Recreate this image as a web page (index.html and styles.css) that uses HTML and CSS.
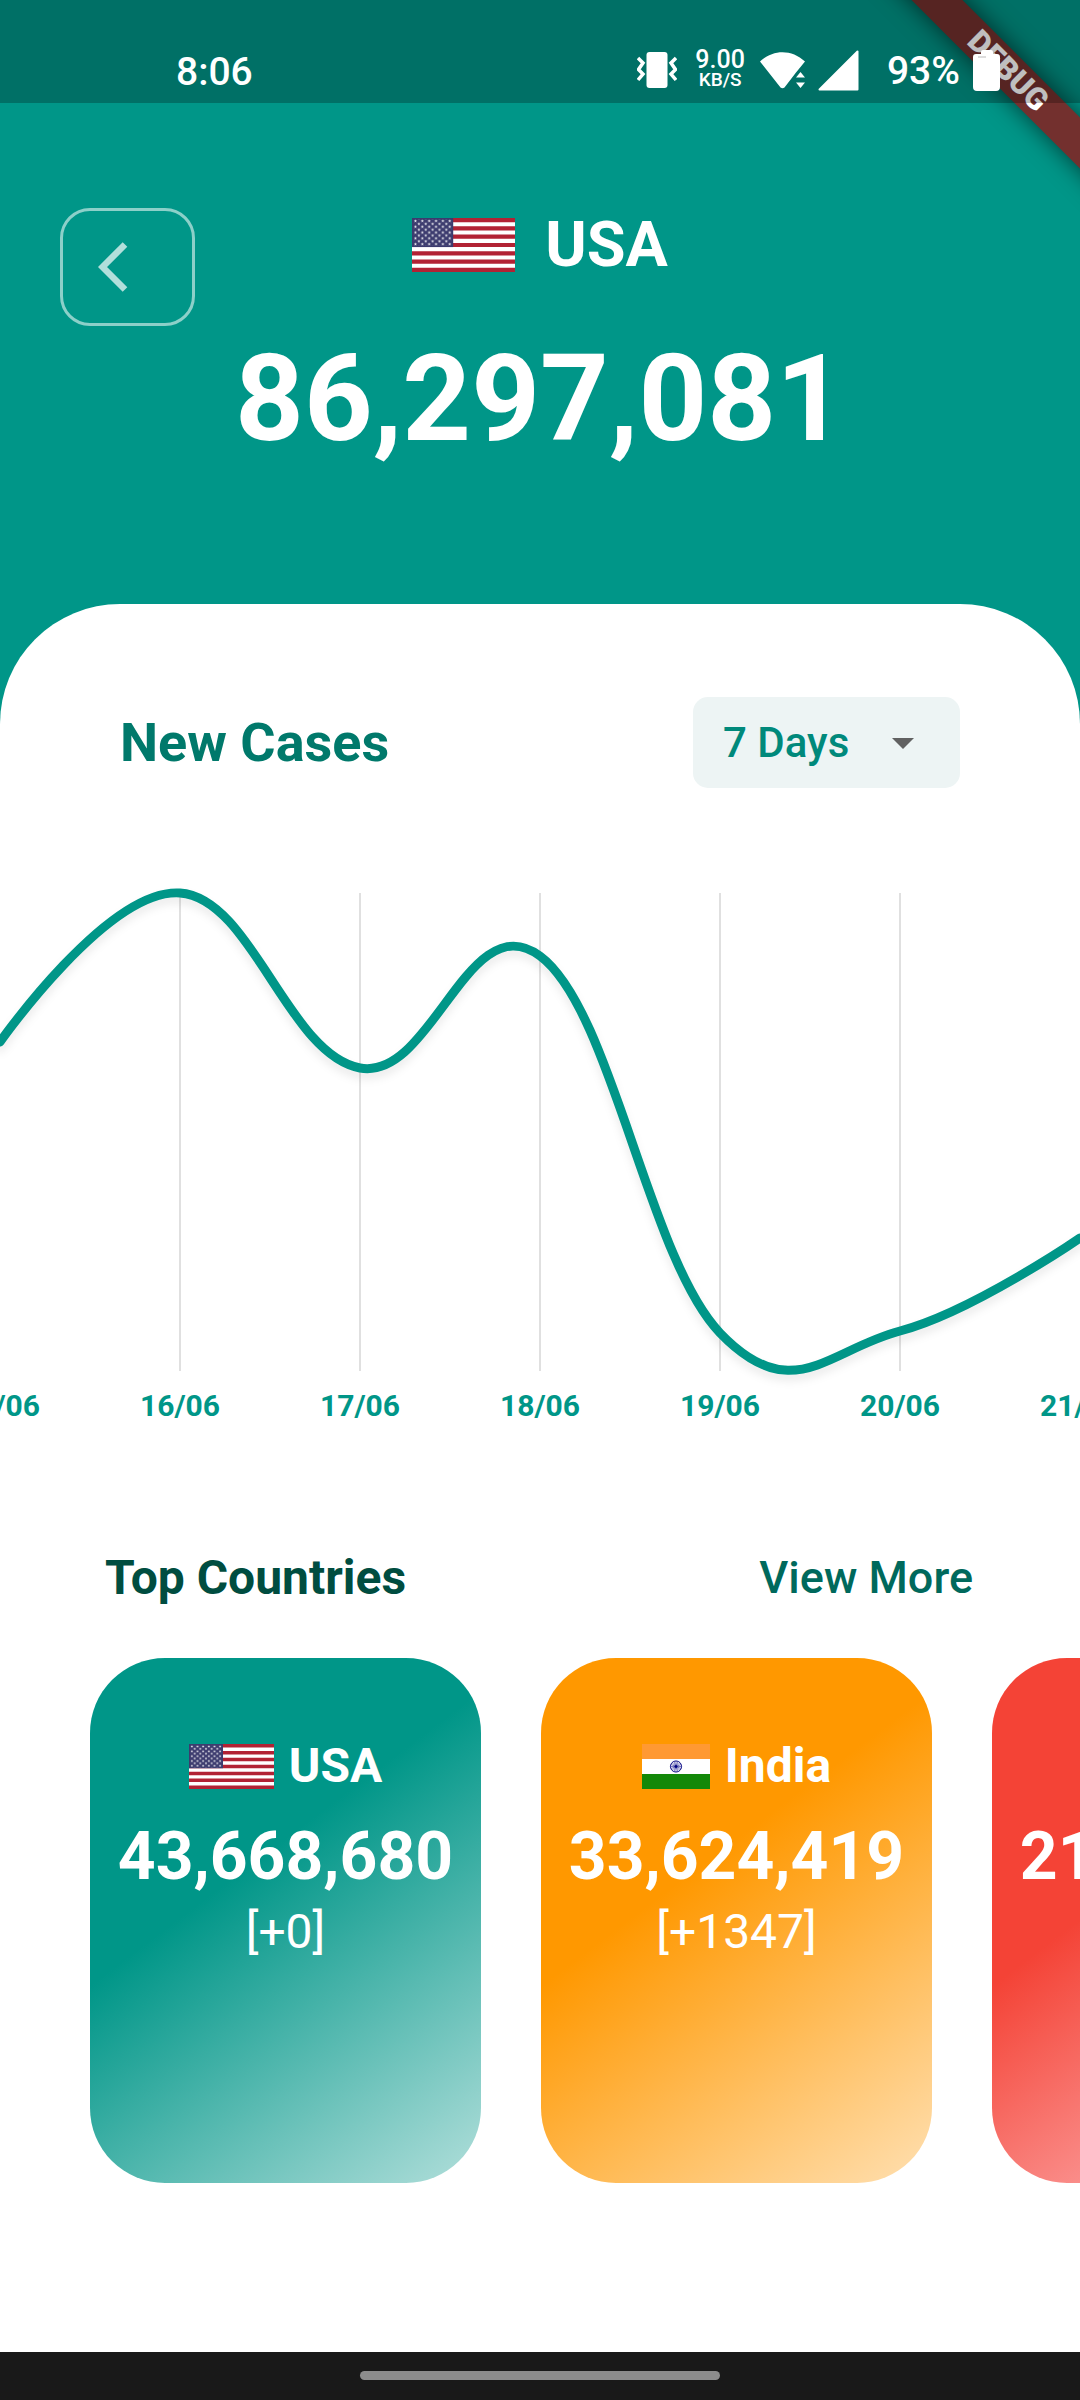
FILE: index.html
```html
<!DOCTYPE html>
<html lang="en">
<head>
<meta charset="utf-8">
<meta name="viewport" content="width=device-width, initial-scale=1">
<title>USA cases</title>
<link rel="stylesheet" href="styles.css">
</head>
<body>
<svg class="sprite" aria-hidden="true">
  <defs>
    <polygon id="star" points="0,-20 4.7,-6.5 19,-6.2 7.6,2.5 11.8,16.2 0,8 -11.8,16.2 -7.6,2.5 -19,-6.2 -4.7,-6.5"/>
    <pattern id="stars" width="82.33" height="70" patternUnits="userSpaceOnUse">
      <g fill="#fff">
        <use href="#star" x="41.17" y="35"/>
        <use href="#star"/>
        <use href="#star" x="82.33"/>
        <use href="#star" y="70"/>
        <use href="#star" x="82.33" y="70"/>
      </g>
    </pattern>
    <symbol id="flag-us" viewBox="0 0 1235 650" preserveAspectRatio="none">
      <rect width="1235" height="650" fill="#fff"/>
      <path d="M0 25H1235M0 125H1235M0 225H1235M0 325H1235M0 425H1235M0 525H1235M0 625H1235" stroke="#b22234" stroke-width="50"/>
      <rect width="494" height="350" fill="#3c3b6e"/>
      <rect x="20" y="14" width="454" height="322" fill="url(#stars)"/>
    </symbol>
    <symbol id="flag-in" viewBox="0 0 900 600" preserveAspectRatio="none">
      <rect width="900" height="600" fill="#fff"/>
      <rect width="900" height="200" fill="#ff9933"/>
      <rect y="400" width="900" height="200" fill="#138808"/>
      <g stroke="#000080" fill="none">
        <circle cx="450" cy="300" r="74" stroke-width="12"/>
        <path stroke-width="7" d="M376 300H524M450 226V374M398 248L502 352M398 352L502 248M382 272L518 328M382 328L518 272M422 232L478 368M422 368L478 232"/>
      </g>
      <circle cx="450" cy="300" r="18" fill="#000080"/>
    </symbol>
    <symbol id="flag-br" viewBox="0 0 1000 700">
      <rect width="1000" height="700" fill="#009b3a"/>
      <path d="M85 350L500 85L915 350L500 615Z" fill="#fedf00"/>
      <circle cx="500" cy="350" r="175" fill="#002776"/>
    </symbol>
  </defs>
</svg>

<div class="banner-clip"><div class="banner">DEBUG</div></div>

<div class="status-bar">
  <span class="clock">8:06</span>
  <div class="status-icons">
    <svg class="vibrate" viewBox="0 0 40 36" width="40" height="36" aria-hidden="true">
      <rect x="9.500" y="0" width="21" height="36" rx="3" fill="#fff"/>
      <path d="M1 6L6 11L1.500 17.500L6 22L1 28M39 6L34 11L38.500 17.500L34 22L39 28" fill="none" stroke="#fff" stroke-width="3.500"/>
    </svg>
    <div class="speed"><span>9.00</span><small>KB/S</small></div>
    <svg class="wifi" viewBox="0 0 46 38" width="46" height="38" aria-hidden="true">
      <path d="M0 10.500C13 -2 32 -2 45 10.500L36 21.500L24.500 36.500Q22.500 38 20.500 36.500Z" fill="#fff"/>
      <path d="M40.500 17L31 29.500L36 38H46V20Z" fill="#007066"/>
      <path d="M40.500 21L45 26.500H36ZM40.500 37L45 31.500H36Z" fill="#fff"/>
    </svg>
    <svg class="signal" viewBox="0 0 41 41" width="41" height="41" aria-hidden="true">
      <path d="M1.500 39.500L39.500 1.500V39.500Z" fill="#fff" stroke="#fff" stroke-width="2" stroke-linejoin="round"/>
    </svg>
    <span class="battery-text">93%</span>
    <svg class="battery" viewBox="0 0 27 41" width="27" height="41" aria-hidden="true">
      <path d="M8 2Q8 0 10 0H18Q20 0 20 2V4H24Q27 4 27 7V37Q27 41 23 41H4Q0 41 0 37V7Q0 4 3 4H8Z" fill="#fff"/>
      <path d="M5 7H13" stroke="#ddd" stroke-width="2"/>
    </svg>
  </div>
</div>

<header class="header">
  <button class="back" type="button" aria-label="Back">
    <svg viewBox="0 0 30 50" width="30" height="50" aria-hidden="true">
      <path d="M27 2.500L4.500 25L27 47.500" fill="none" stroke="#b2dfdb" stroke-width="6.500"/>
    </svg>
  </button>
  <div class="summary">
    <h1 class="country"><svg class="flag" aria-hidden="true"><use href="#flag-us"/></svg>USA</h1>
    <p class="total">86,297,081</p>
  </div>
</header>

<main class="panel">
  <div class="cases-row">
    <h2 class="cases-title">New Cases</h2>
    <div class="range">
      <select class="range-select" aria-label="Period">
        <option>7 Days</option>
        <option>14 Days</option>
        <option>30 Days</option>
      </select>
      <svg class="range-arrow" viewBox="0 0 22 11" width="22" height="11" aria-hidden="true"><path d="M0 0H22L11 11Z" fill="#616161"/></svg>
    </div>
  </div>

  <svg class="chart" viewBox="0 880 1080 500" role="img" aria-label="New cases per day">
    <path d="M180 892V1370M360 892V1370M540 892V1370M720 892V1370M900 892V1370" stroke="#e0e0e0" stroke-width="2"/>
    <path class="curve" d="M0 1041C0 1041 108 887 180 892C252 897 288 1054 360 1067C432 1080 468 902 540 955C612 1008 648 1257 720 1332C792 1407 828 1349 900 1330C972 1311 1080 1237 1080 1237"/>
  </svg>
  <div class="dates">
    <span>15/06</span><span>16/06</span><span>17/06</span><span>18/06</span><span>19/06</span><span>20/06</span><span>21/06</span>
  </div>

  <div class="top-row">
    <h2 class="top-title">Top Countries</h2>
    <a class="more" href="#more">View More</a>
  </div>
  <div class="cards">
    <article class="card card-teal">
      <h3 class="card-name"><svg class="flag" aria-hidden="true"><use href="#flag-us"/></svg>USA</h3>
      <p class="card-total">43,668,680</p>
      <p class="card-new">[+0]</p>
    </article>
    <article class="card card-orange">
      <h3 class="card-name"><svg class="flag flag-short" aria-hidden="true"><use href="#flag-in"/></svg>India</h3>
      <p class="card-total">33,624,419</p>
      <p class="card-new">[+1347]</p>
    </article>
    <article class="card card-red">
      <h3 class="card-name"><svg class="flag flag-short" aria-hidden="true"><use href="#flag-br"/></svg>Brazil</h3>
      <p class="card-total">21,399,546</p>
      <p class="card-new">[+0]</p>
    </article>
  </div>
</main>

<div class="nav-bar"><span class="nav-pill"></span></div>
</body>
</html>
```
FILE: styles.css
```css
* { box-sizing: border-box; }
body {
  margin: 0;
  min-height: 100vh;
  display: flex;
  flex-direction: column;
  position: relative;
  background: #009688;
  color: #fff;
  font-family: Roboto, "Liberation Sans", sans-serif;
  line-height: 1.17;
  overflow-x: hidden;
}
h1, h2, h3, p { margin: 0; }
svg { display: block; flex: none; }
.sprite { position: absolute; width: 0; height: 0; }

/* corner ribbon, under the translucent status bar */
.banner-clip {
  position: absolute;
  top: 0;
  right: 0;
  width: 240px;
  height: 240px;
  overflow: hidden;
}
.banner {
  position: absolute;
  top: 53px;
  right: -88px;
  width: 320px;
  height: 36px;
  background: #73302e;
  box-shadow: 0 0 24px rgba(0, 0, 0, .6);
  transform: rotate(45deg);
  font-size: 31px;
  font-weight: 900;
  line-height: 36px;
  text-align: center;
}

.status-bar {
  position: relative;
  display: flex;
  justify-content: space-between;
  height: 103px;
  padding: 36px 80px 0 176px;
  background: rgba(0, 0, 0, .25);
}
.clock, .battery-text {
  font-size: 39px;
  font-weight: 500;
  line-height: 68px;
  padding-top: 2px;
}
.status-icons {
  display: flex;
  align-items: center;
  height: 68px;
}
.speed {
  display: flex;
  flex-direction: column;
  align-items: center;
  margin: 0 15px 0 18px;
  font-size: 25px;
  font-weight: 500;
  line-height: 20px;
}
.speed small { font-size: 19px; }
.signal { margin: 0 28px 0 12px; }
.battery { margin-left: 13px; }

.header {
  display: grid;
  grid-template-columns: 135px 1fr 135px;
  align-items: start;
  padding: 105px 60px 134px;
}
.back {
  display: flex;
  align-items: center;
  height: 118px;
  padding: 0 35px;
  background: none;
  border: 3px solid #8cd0c9;
  border-radius: 30px;
}
.summary { text-align: center; }
.country {
  display: flex;
  justify-content: center;
  align-items: center;
  gap: 30px;
  font-size: 63px;
  line-height: 74px;
}
.flag { width: 103px; height: 54px; }
.total {
  margin-top: 47px;
  font-size: 120px;
  font-weight: 700;
  line-height: 141px;
}

.panel {
  flex: 1;
  padding: 93px 0 60px;
  background: #fff;
  border-radius: 120px 120px 0 0;
  overflow: hidden;
}
.cases-row {
  display: flex;
  justify-content: space-between;
  align-items: center;
  padding: 0 120px;
}
.cases-title { color: #00796b; font-size: 54px; }
.range { position: relative; width: 267px; }
.range-select {
  appearance: none;
  width: 100%;
  height: 91px;
  padding: 0 30px;
  background: #edf4f4;
  border: 0;
  border-radius: 15px;
  color: #00897b;
  font: 500 42px Roboto, "Liberation Sans", sans-serif;
}
.range-arrow {
  position: absolute;
  top: 41px;
  right: 46px;
  pointer-events: none;
}

.chart { width: 100%; height: auto; margin-top: 93px; overflow: visible; }
.curve {
  fill: none;
  stroke: #009688;
  stroke-width: 9;
  stroke-linecap: round;
  filter: drop-shadow(0 6px 4px rgba(0, 0, 0, .08));
}
/* seven columns centred on the grid lines, half a column over each edge */
.dates {
  display: grid;
  grid-template-columns: repeat(7, 1fr);
  width: calc(700% / 6);
  margin: 8px 0 0 calc(-50% / 6);
  color: #009688;
  font-size: 30px;
  font-weight: 700;
  line-height: 34px;
  text-align: center;
}

.top-row {
  display: flex;
  justify-content: space-between;
  align-items: center;
  margin-top: 127px;
  padding: 0 107px 0 105px;
  line-height: 56px;
}
.top-title { color: #004d40; font-size: 48px; }
.more { color: #00695c; font-size: 45px; font-weight: 500; text-decoration: none; }

.cards {
  display: flex;
  gap: 60px;
  margin-top: 52px;
  padding: 0 90px;
  overflow-x: auto;
  scrollbar-width: none;
}
.card {
  flex: none;
  width: 391px;
  height: 525px;
  padding-top: 80px;
  border-radius: 75px;
  text-align: center;
}
.card-teal { background: linear-gradient(143deg, #009688 40%, #b2dfdb); }
.card-orange { background: linear-gradient(143deg, #ff9800 40%, #ffe0b2); }
.card-red { background: linear-gradient(143deg, #f44336 40%, #ffcdd2); }
.card-name {
  display: flex;
  justify-content: center;
  align-items: center;
  gap: 15px;
  font-size: 48px;
  line-height: 56px;
}
.card-name .flag { width: 85px; height: 45px; }
.card-name .flag-short { width: 68px; }
.card-total {
  margin-top: 24px;
  font-size: 66px;
  font-weight: 700;
  line-height: 78px;
}
.card-new { font-size: 48px; line-height: 72px; }

.nav-bar {
  display: flex;
  justify-content: center;
  align-items: center;
  height: 48px;
  background: #191919;
}
.nav-pill {
  width: 33.333%;
  height: 9px;
  margin-bottom: 2px;
  border-radius: 5px;
  background: #8c8c8c;
}
```
